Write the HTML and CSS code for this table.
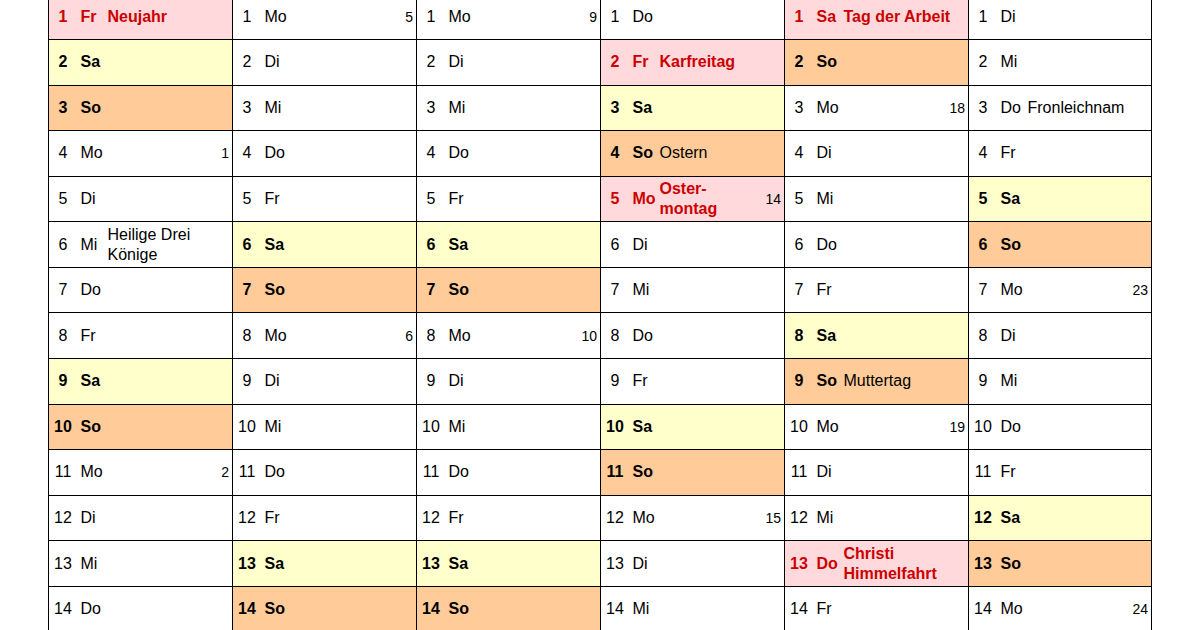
FILE: index.html
```html
<!DOCTYPE html>
<html lang="de">
<head>
<meta charset="utf-8">
<title>Kalender 2021</title>
<link rel="stylesheet" href="styles.css">
</head>
<body>
<div class="cal">
  <div class="month">
    <div class="c hol"><span class="n">1</span><span class="d">Fr</span><span class="e">Neujahr</span></div>
    <div class="c sat"><span class="n">2</span><span class="d">Sa</span></div>
    <div class="c sun"><span class="n">3</span><span class="d">So</span></div>
    <div class="c"><span class="n">4</span><span class="d">Mo</span><span class="w">1</span></div>
    <div class="c"><span class="n">5</span><span class="d">Di</span></div>
    <div class="c"><span class="n">6</span><span class="d">Mi</span><span class="e">Heilige Drei<br>Könige</span></div>
    <div class="c"><span class="n">7</span><span class="d">Do</span></div>
    <div class="c"><span class="n">8</span><span class="d">Fr</span></div>
    <div class="c sat"><span class="n">9</span><span class="d">Sa</span></div>
    <div class="c sun"><span class="n">10</span><span class="d">So</span></div>
    <div class="c"><span class="n">11</span><span class="d">Mo</span><span class="w">2</span></div>
    <div class="c"><span class="n">12</span><span class="d">Di</span></div>
    <div class="c"><span class="n">13</span><span class="d">Mi</span></div>
    <div class="c"><span class="n">14</span><span class="d">Do</span></div>
  </div>
  <div class="month">
    <div class="c"><span class="n">1</span><span class="d">Mo</span><span class="w">5</span></div>
    <div class="c"><span class="n">2</span><span class="d">Di</span></div>
    <div class="c"><span class="n">3</span><span class="d">Mi</span></div>
    <div class="c"><span class="n">4</span><span class="d">Do</span></div>
    <div class="c"><span class="n">5</span><span class="d">Fr</span></div>
    <div class="c sat"><span class="n">6</span><span class="d">Sa</span></div>
    <div class="c sun"><span class="n">7</span><span class="d">So</span></div>
    <div class="c"><span class="n">8</span><span class="d">Mo</span><span class="w">6</span></div>
    <div class="c"><span class="n">9</span><span class="d">Di</span></div>
    <div class="c"><span class="n">10</span><span class="d">Mi</span></div>
    <div class="c"><span class="n">11</span><span class="d">Do</span></div>
    <div class="c"><span class="n">12</span><span class="d">Fr</span></div>
    <div class="c sat"><span class="n">13</span><span class="d">Sa</span></div>
    <div class="c sun"><span class="n">14</span><span class="d">So</span></div>
  </div>
  <div class="month">
    <div class="c"><span class="n">1</span><span class="d">Mo</span><span class="w">9</span></div>
    <div class="c"><span class="n">2</span><span class="d">Di</span></div>
    <div class="c"><span class="n">3</span><span class="d">Mi</span></div>
    <div class="c"><span class="n">4</span><span class="d">Do</span></div>
    <div class="c"><span class="n">5</span><span class="d">Fr</span></div>
    <div class="c sat"><span class="n">6</span><span class="d">Sa</span></div>
    <div class="c sun"><span class="n">7</span><span class="d">So</span></div>
    <div class="c"><span class="n">8</span><span class="d">Mo</span><span class="w">10</span></div>
    <div class="c"><span class="n">9</span><span class="d">Di</span></div>
    <div class="c"><span class="n">10</span><span class="d">Mi</span></div>
    <div class="c"><span class="n">11</span><span class="d">Do</span></div>
    <div class="c"><span class="n">12</span><span class="d">Fr</span></div>
    <div class="c sat"><span class="n">13</span><span class="d">Sa</span></div>
    <div class="c sun"><span class="n">14</span><span class="d">So</span></div>
  </div>
  <div class="month">
    <div class="c"><span class="n">1</span><span class="d">Do</span></div>
    <div class="c hol"><span class="n">2</span><span class="d">Fr</span><span class="e">Karfreitag</span></div>
    <div class="c sat"><span class="n">3</span><span class="d">Sa</span></div>
    <div class="c sun"><span class="n">4</span><span class="d">So</span><span class="e">Ostern</span></div>
    <div class="c hol"><span class="n">5</span><span class="d">Mo</span><span class="e">Oster-<br>montag</span><span class="w">14</span></div>
    <div class="c"><span class="n">6</span><span class="d">Di</span></div>
    <div class="c"><span class="n">7</span><span class="d">Mi</span></div>
    <div class="c"><span class="n">8</span><span class="d">Do</span></div>
    <div class="c"><span class="n">9</span><span class="d">Fr</span></div>
    <div class="c sat"><span class="n">10</span><span class="d">Sa</span></div>
    <div class="c sun"><span class="n">11</span><span class="d">So</span></div>
    <div class="c"><span class="n">12</span><span class="d">Mo</span><span class="w">15</span></div>
    <div class="c"><span class="n">13</span><span class="d">Di</span></div>
    <div class="c"><span class="n">14</span><span class="d">Mi</span></div>
  </div>
  <div class="month">
    <div class="c hol"><span class="n">1</span><span class="d">Sa</span><span class="e">Tag der Arbeit</span></div>
    <div class="c sun"><span class="n">2</span><span class="d">So</span></div>
    <div class="c"><span class="n">3</span><span class="d">Mo</span><span class="w">18</span></div>
    <div class="c"><span class="n">4</span><span class="d">Di</span></div>
    <div class="c"><span class="n">5</span><span class="d">Mi</span></div>
    <div class="c"><span class="n">6</span><span class="d">Do</span></div>
    <div class="c"><span class="n">7</span><span class="d">Fr</span></div>
    <div class="c sat"><span class="n">8</span><span class="d">Sa</span></div>
    <div class="c sun"><span class="n">9</span><span class="d">So</span><span class="e">Muttertag</span></div>
    <div class="c"><span class="n">10</span><span class="d">Mo</span><span class="w">19</span></div>
    <div class="c"><span class="n">11</span><span class="d">Di</span></div>
    <div class="c"><span class="n">12</span><span class="d">Mi</span></div>
    <div class="c hol"><span class="n">13</span><span class="d">Do</span><span class="e">Christi<br>Himmelfahrt</span></div>
    <div class="c"><span class="n">14</span><span class="d">Fr</span></div>
  </div>
  <div class="month">
    <div class="c"><span class="n">1</span><span class="d">Di</span></div>
    <div class="c"><span class="n">2</span><span class="d">Mi</span></div>
    <div class="c"><span class="n">3</span><span class="d">Do</span><span class="e">Fronleichnam</span></div>
    <div class="c"><span class="n">4</span><span class="d">Fr</span></div>
    <div class="c sat"><span class="n">5</span><span class="d">Sa</span></div>
    <div class="c sun"><span class="n">6</span><span class="d">So</span></div>
    <div class="c"><span class="n">7</span><span class="d">Mo</span><span class="w">23</span></div>
    <div class="c"><span class="n">8</span><span class="d">Di</span></div>
    <div class="c"><span class="n">9</span><span class="d">Mi</span></div>
    <div class="c"><span class="n">10</span><span class="d">Do</span></div>
    <div class="c"><span class="n">11</span><span class="d">Fr</span></div>
    <div class="c sat"><span class="n">12</span><span class="d">Sa</span></div>
    <div class="c sun"><span class="n">13</span><span class="d">So</span></div>
    <div class="c"><span class="n">14</span><span class="d">Mo</span><span class="w">24</span></div>
  </div>
</div>
</body>
</html>
```

FILE: styles.css
```css
html, body {
  margin: 0;
  padding: 0;
  background: #fff;
  overflow: hidden;
}

body {
  font-family: "Liberation Sans", Arial, sans-serif;
  font-size: 16px;
  color: #000;
}

.cal {
  display: grid;
  grid-template-columns: 183px 183px 183px 183px 183px 182px;
  gap: 1px;
  width: max-content;
  margin: -6.6px 0 0 48px;
  background: #000;
  border: 1px solid #000;
}

.month {
  display: flex;
  flex-direction: column;
  gap: 1px;
}

.c {
  height: 44.58px;
  display: flex;
  align-items: center;
  background: #fff;
  line-height: 20px;
}

.n {
  width: 20px;
  margin-left: 4px;
  text-align: center;
  flex: none;
}

.d {
  width: 27px;
  margin-left: 7.5px;
  flex: none;
}

.e {
  flex: 1;
  white-space: nowrap;
}

.w {
  margin-left: auto;
  padding-right: 3px;
  font-size: 14px;
  font-weight: normal;
  color: #000;
}

.sat {
  background: #ffffcc;
  font-weight: bold;
}

.sun {
  background: #ffcc99;
  font-weight: bold;
}

.sun .e {
  font-weight: normal;
}

.hol {
  background: #ffd9dc;
  color: #cc0000;
  font-weight: bold;
}
```
